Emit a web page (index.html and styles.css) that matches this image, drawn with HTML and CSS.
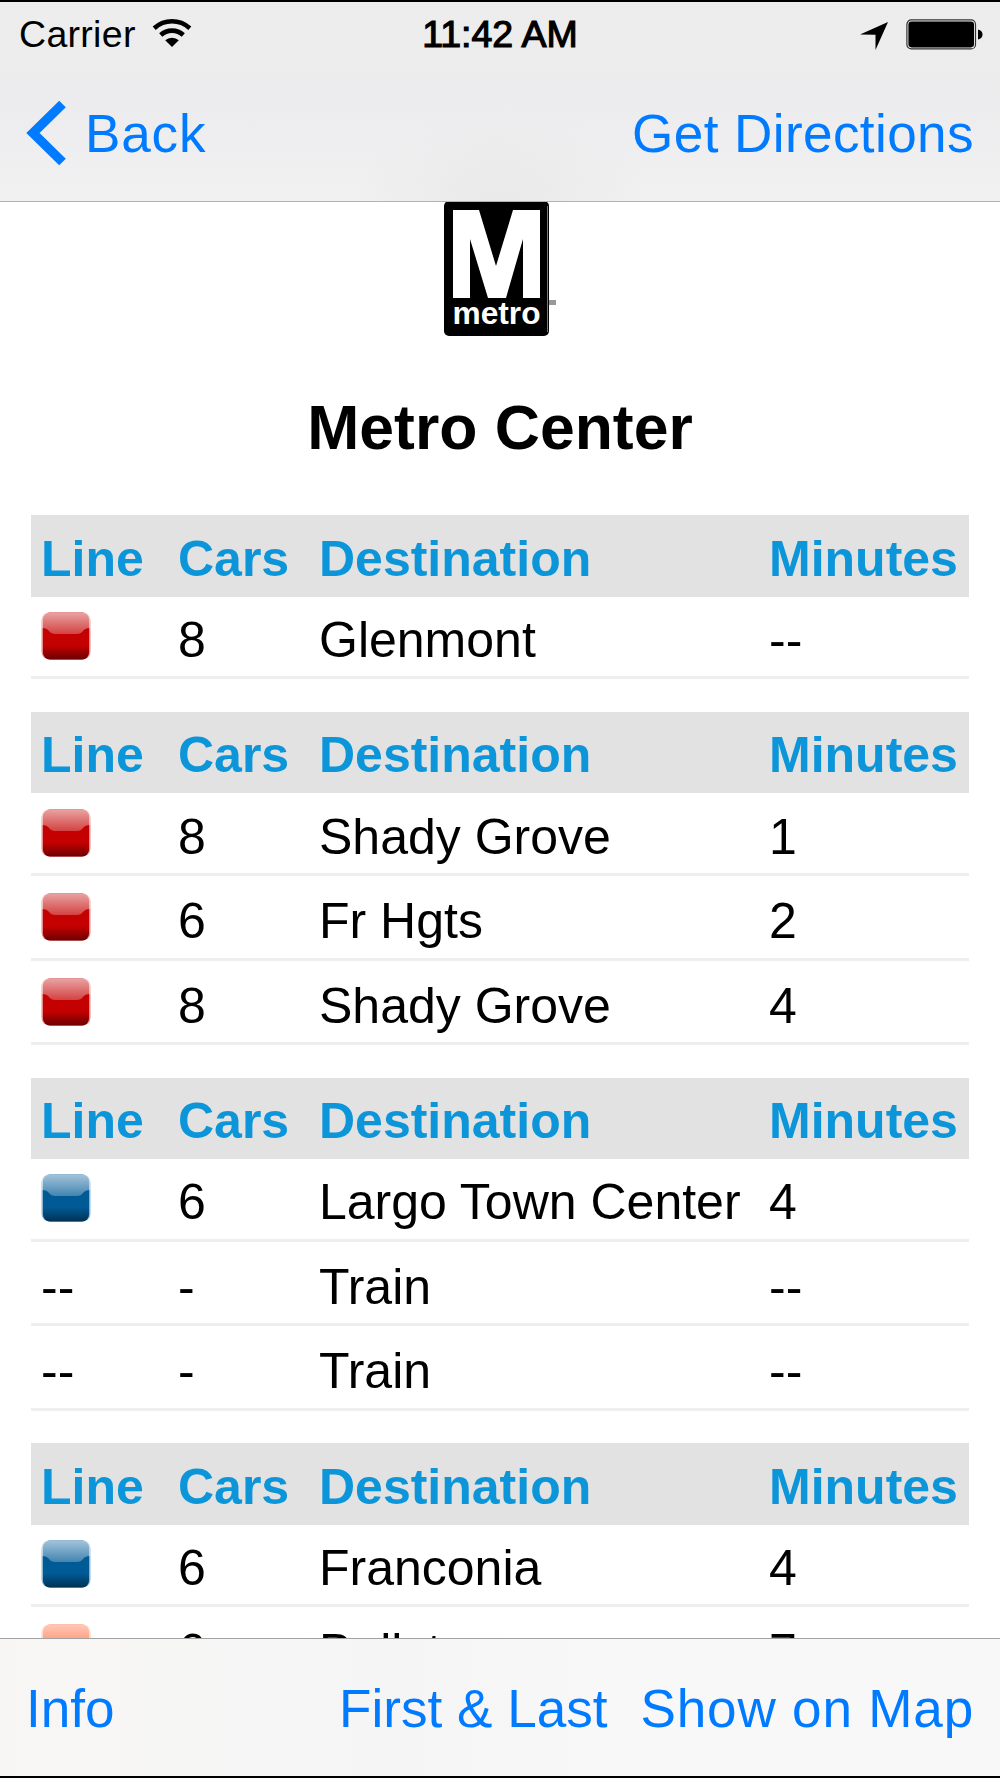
FILE: index.html
```html
<!DOCTYPE html>
<html lang="en">
<head>
    <meta charset="UTF-8">
    <meta name="viewport" content="width=device-width, initial-scale=1.0">
    <title>Metro Center</title>
    <link rel="stylesheet" href="styles.css">
</head>
<body>

<!-- Shared icon for the train lines, coloured by currentColor -->
<svg class="defs" width="0" height="0">
    <defs>
        <linearGradient id="shade" x1="0" y1="0" x2="0" y2="1">
            <stop offset="0.7" stop-color="#000" stop-opacity="0"/>
            <stop offset="1" stop-color="#000" stop-opacity="0.45"/>
        </linearGradient>
        <linearGradient id="gloss" x1="0" y1="0" x2="0" y2="1">
            <stop offset="0" stop-color="#fff" stop-opacity="0.64"/>
            <stop offset="1" stop-color="#fff" stop-opacity="0.26"/>
        </linearGradient>
        <symbol id="square" viewBox="0 0 50 48">
            <rect x="0.5" y="0.5" width="49" height="47" rx="8" fill="currentColor" opacity="0.45"/>
            <rect x="2" y="0.5" width="46" height="47" rx="7" fill="currentColor"/>
            <rect x="2" y="0.5" width="46" height="47" rx="7" fill="url(#shade)"/>
            <path d="M0.5 16V8Q1 0.5 9 0.5H41Q49 0.5 49.5 8V16Q44 16 42 19Q40 22 36 22H14Q10 22 8 19Q6 16 0.5 16Z" fill="url(#gloss)"/>
        </symbol>
    </defs>
</svg>

<div class="screen">
    <header class="topbar">
        <div class="status">
            <div class="status-left">
                <span class="carrier">Carrier</span>
                <svg class="wifi" width="40" height="29" viewBox="0 0 40 29">
                    <g fill="none" stroke="#000" stroke-width="4.6">
                        <path d="M2.2 9.2Q10 2.3 20 2.3T37.8 9.2"/>
                        <path d="M8.7 16Q13.5 11.6 20 11.6T31.3 16"/>
                    </g>
                    <path d="M20 28L13.2 21.3Q16 18.8 20 18.8T26.8 21.3Z"/>
                </svg>
            </div>
            <span class="time">11:42 AM</span>
            <div class="status-right">
                <svg class="location" width="28" height="28" viewBox="0 0 28 28">
                    <path d="M28 0L15.5 28V12.8L0 12.5Z"/>
                </svg>
                <svg class="battery" width="77" height="31" viewBox="0 0 77 31">
                    <rect x="0.9" y="0.9" width="68.6" height="29" rx="4.5" fill="none" stroke="#333" stroke-width="1.2"/>
                    <rect x="2.4" y="2.4" width="65.6" height="26" rx="3.3"/>
                    <path d="M72 10.5Q76.5 11.5 76.5 15.5T72 20.5Z"/>
                </svg>
            </div>
        </div>
        <nav class="nav">
            <a class="back">
                <svg width="41" height="66" viewBox="0 0 41 66">
                    <path d="M36.5 4L7 33L36.5 62" fill="none" stroke="#007aff" stroke-width="9.4"/>
                </svg>
                <span>Back</span>
            </a>
            <a class="directions">Get Directions</a>
        </nav>
    </header>

    <main class="content">
        <svg class="logo" width="112" height="135" viewBox="0 0 112 135">
            <rect x="0" y="-1" width="105" height="135" rx="5"/>
            <path d="M103.5 4V130" stroke="#777" stroke-width="1"/>
            <path d="M9 8H35L52 64L69 8H96V96H79V37L62 96H44L26 37V96H9Z" fill="#fff"/>
            <text x="52.5" y="122" class="logo-text" text-anchor="middle" textLength="88" lengthAdjust="spacingAndGlyphs">metro</text>
            <rect x="105" y="98" width="7" height="5" fill="#999"/>
        </svg>
        <h1>Metro Center</h1>

        <section class="trains">
            <div class="row head"><span>Line</span><span>Cars</span><span>Destination</span><span>Minutes</span></div>
            <div class="row"><svg class="icon red"><use href="#square"/></svg><span>8</span><span>Glenmont</span><span>--</span></div>
        </section>

        <section class="trains">
            <div class="row head"><span>Line</span><span>Cars</span><span>Destination</span><span>Minutes</span></div>
            <div class="row"><svg class="icon red"><use href="#square"/></svg><span>8</span><span>Shady Grove</span><span>1</span></div>
            <div class="row"><svg class="icon red"><use href="#square"/></svg><span>6</span><span>Fr Hgts</span><span>2</span></div>
            <div class="row"><svg class="icon red"><use href="#square"/></svg><span>8</span><span>Shady Grove</span><span>4</span></div>
        </section>

        <section class="trains">
            <div class="row head"><span>Line</span><span>Cars</span><span>Destination</span><span>Minutes</span></div>
            <div class="row"><svg class="icon blue"><use href="#square"/></svg><span>6</span><span>Largo Town Center</span><span>4</span></div>
            <div class="row"><span>--</span><span>-</span><span>Train</span><span>--</span></div>
            <div class="row"><span>--</span><span>-</span><span>Train</span><span>--</span></div>
        </section>

        <section class="trains">
            <div class="row head"><span>Line</span><span>Cars</span><span>Destination</span><span>Minutes</span></div>
            <div class="row"><svg class="icon blue"><use href="#square"/></svg><span>6</span><span>Franconia</span><span>4</span></div>
            <div class="row"><svg class="icon orange"><use href="#square"/></svg><span>6</span><span>Ballston</span><span>7</span></div>
        </section>
    </main>

    <footer class="toolbar">
        <a class="info">Info</a>
        <a class="first-last">First &amp; Last</a>
        <a class="show-map">Show on Map</a>
    </footer>
</div>

</body>
</html>
```

FILE: styles.css
```css
* {
    box-sizing: border-box;
}
body {
    margin: 0;
    font-family: "Liberation Sans", Arial, sans-serif;
    background-color: #fff;
    color: #000;
}
.defs {
    display: block;
}
.screen {
    display: flex;
    flex-direction: column;
    height: 1778px;
    overflow: hidden;
    border-top: 2px solid #000;
    border-bottom: 2px solid #000;
}

/* Status and navigation bar */
.topbar {
    flex: none;
    height: 200px;
    border-bottom: 1px solid #b2b2b2;
    background: radial-gradient(ellipse 150px 90px at 50% 100%, #e9e9e9, rgba(233, 233, 233, 0)), linear-gradient(#ededed, #ececee 50%, #f1f1f2);
}
.status {
    display: grid;
    grid-template-columns: 1fr auto 1fr;
    align-items: center;
    height: 64px;
    padding: 0 17px 0 18px;
    font-size: 37.5px;
}
.status-left,
.status-right {
    display: flex;
    align-items: center;
}
.status-right {
    justify-content: flex-end;
    gap: 18px;
}
.carrier {
    margin-left: 1px;
    letter-spacing: 0.3px;
}
.wifi {
    margin: -2px 0 0 16px;
}
.time {
    margin-right: 1px;
    -webkit-text-stroke: 1.2px #000;
}
.location {
    margin-top: 3px;
}
.battery {
    margin-top: 1px;
}
.nav {
    display: flex;
    justify-content: space-between;
    align-items: center;
    height: 134px;
    padding: 0 26px 0;
    font-size: 53.1px;
    color: #007aff;
}
.back {
    display: flex;
    align-items: center;
    gap: 18px;
    letter-spacing: 0.8px;
}
.directions {
    letter-spacing: 0.4px;
}

/* Station */
.content {
    flex: 1;
    min-height: 0;
    overflow: hidden;
    padding: 0 31px;
}
.logo {
    display: block;
    margin-left: 413px;
}
.logo-text {
    font-size: 32px;
    font-weight: bold;
    fill: #fff;
}
h1 {
    margin: 54px 0 52.4px;
    font-size: 62.5px;
    line-height: 72px;
    text-align: center;
}

/* Arrival tables */
.trains {
    margin-bottom: 32.8px;
}
.row {
    display: grid;
    grid-template-columns: 137px 141px 450px 1fr;
    align-items: end;
    height: 84.375px;
    padding: 0 0 6.5px 10px;
    border-bottom: 3px solid #eee;
    font-size: 50px;
    line-height: 60px;
    white-space: nowrap;
}
.head {
    height: 81.25px;
    padding-bottom: 8px;
    border-bottom: none;
    background-color: #e2e2e2;
    color: #0c95d9;
    font-weight: bold;
}
.head + .row {
    height: 82.8px;
}
.icon {
    width: 50px;
    height: 48px;
    margin-bottom: 10px;
}
.red {
    color: #c40000;
}
.blue {
    color: #005a96;
}
.orange {
    color: #ff6a38;
}

/* Bottom toolbar */
.toolbar {
    flex: none;
    display: flex;
    align-items: center;
    height: 138px;
    padding: 2px 26px 0;
    border-top: 1px solid #a2a2a2;
    background: linear-gradient(90deg, #f8f6f5, #f6f6f6 25%, #f5f5f5 40%, #f8f8f8 60%);
    font-size: 53.1px;
    color: #007aff;
}
.first-last {
    margin-left: auto;
    margin-right: 33px;
}
.show-map {
    letter-spacing: 0.8px;
}
```
